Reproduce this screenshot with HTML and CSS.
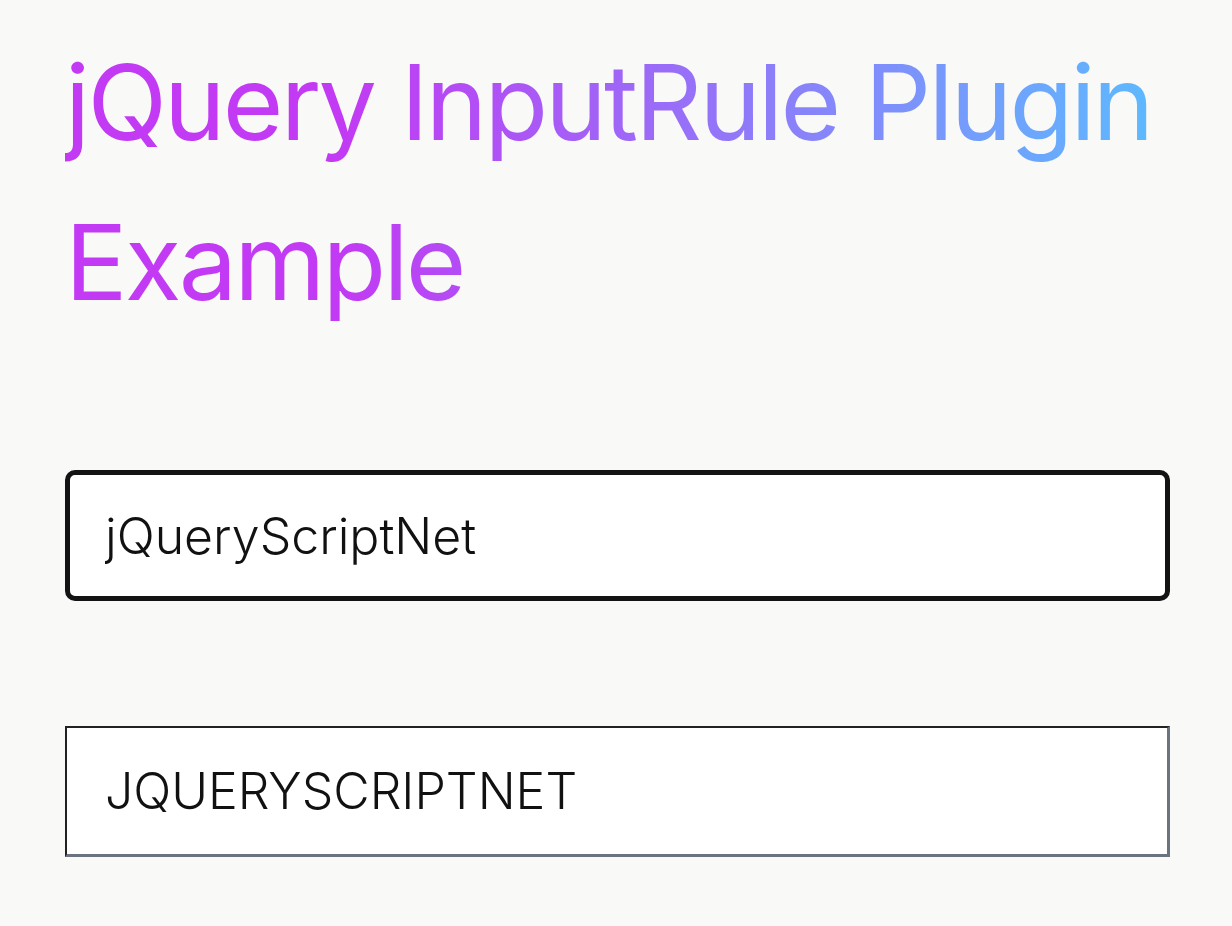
FILE: index.html
```html
<!DOCTYPE html>
<html lang="en">
  <head>
    <meta charset="UTF-8" />
    <meta name="viewport" content="width=device-width, initial-scale=1.0" />
    <title>jQuery InputRule Plugin Example</title>
    <link rel="stylesheet" href="styles.css">
  </head>
  <body>
    <div class="container">
      <h1 class="title">jQuery InputRule Plugin Example</h1>

      <input type="text" class="rule-input active" id="input-camel" value="jQueryScriptNet" />

      <input type="text" class="rule-input" id="input-upper" value="JQUERYSCRIPTNET" />
    </div>
  </body>
</html>
```

FILE: styles.css
```css
body {
  margin: 0;
  padding: 0;
  background-color: #f9f9f8;
  font-family: Inter, "Noto Sans", sans-serif;
}

.container {
  padding: 22px 62px 0 65px;
}

.title {
  margin: 0 0 128px 0;
  font-size: 104px;
  font-weight: 400;
  line-height: 160px;
  letter-spacing: -2.8px;
  background: linear-gradient(90deg, #c23af3 25%, #5bbcff 100%);
  -webkit-background-clip: text;
  background-clip: text;
  color: transparent;
}

.rule-input {
  display: block;
  box-sizing: border-box;
  width: 100%;
  height: 131px;
  margin: 0 0 125px 0;
  padding: 0 38px;
  font-family: Inter, "Noto Sans", sans-serif;
  font-size: 50px;
  font-weight: 300;
  color: #111;
  background: #fff;
  border: 2px solid #222;
  border-right-color: #6b7280;
  border-bottom-color: #6b7280;
  border-right-width: 3px;
  border-bottom-width: 3px;
}

.rule-input:last-child {
  margin-bottom: 0;
}

.rule-input.active {
  border: 5px solid #131313;
  border-radius: 10px;
  padding: 0 35px;
  outline: none;
}
```
